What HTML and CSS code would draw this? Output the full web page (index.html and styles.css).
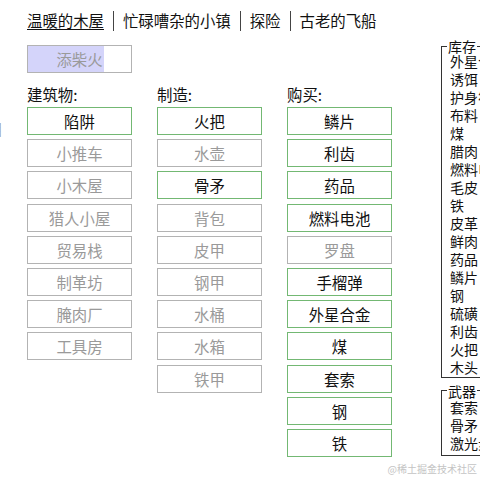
FILE: index.html
```html
<!DOCTYPE html>
<html lang="zh">
<head>
<meta charset="utf-8">
<title>温暖的木屋</title>
<link rel="stylesheet" href="styles.css">
</head>
<body>
<span class="edge-mark">目</span>
<div class="page">
  <div class="main">
    <div class="tabs">
      <span class="tab active">温暖的木屋</span>
      <span class="tab">忙碌嘈杂的小镇</span>
      <span class="tab">探险</span>
      <span class="tab">古老的飞船</span>
    </div>
    <div class="fire btn off">
      <div class="cooldown" style="width:74%"></div>
      <span class="label">添柴火</span>
    </div>
    <div class="columns">
      <div class="col">
        <div class="col-title">建筑物:</div>
        <div class="btn on">陷阱</div>
        <div class="btn off">小推车</div>
        <div class="btn off">小木屋</div>
        <div class="btn off">猎人小屋</div>
        <div class="btn off">贸易栈</div>
        <div class="btn off">制革坊</div>
        <div class="btn off">腌肉厂</div>
        <div class="btn off">工具房</div>
      </div>
      <div class="col">
        <div class="col-title">制造:</div>
        <div class="btn on">火把</div>
        <div class="btn off">水壶</div>
        <div class="btn on">骨矛</div>
        <div class="btn off">背包</div>
        <div class="btn off">皮甲</div>
        <div class="btn off">钢甲</div>
        <div class="btn off">水桶</div>
        <div class="btn off">水箱</div>
        <div class="btn off">铁甲</div>
      </div>
      <div class="col">
        <div class="col-title">购买:</div>
        <div class="btn on">鳞片</div>
        <div class="btn on">利齿</div>
        <div class="btn on">药品</div>
        <div class="btn on">燃料电池</div>
        <div class="btn off">罗盘</div>
        <div class="btn on">手榴弹</div>
        <div class="btn on">外星合金</div>
        <div class="btn on">煤</div>
        <div class="btn on">套索</div>
        <div class="btn on">钢</div>
        <div class="btn on">铁</div>
      </div>
    </div>
  </div>
  <div class="side">
    <fieldset class="store stock">
      <legend>库存</legend>
      <div class="item">外星合金</div>
      <div class="item">诱饵</div>
      <div class="item">护身符</div>
      <div class="item">布料</div>
      <div class="item">煤</div>
      <div class="item">腊肉</div>
      <div class="item">燃料电池</div>
      <div class="item">毛皮</div>
      <div class="item">铁</div>
      <div class="item">皮革</div>
      <div class="item">鲜肉</div>
      <div class="item">药品</div>
      <div class="item">鳞片</div>
      <div class="item">钢</div>
      <div class="item">硫磺</div>
      <div class="item">利齿</div>
      <div class="item">火把</div>
      <div class="item">木头</div>
    </fieldset>
    <fieldset class="store weapons">
      <legend>武器</legend>
      <div class="item">套索</div>
      <div class="item">骨矛</div>
      <div class="item">激光步枪</div>
    </fieldset>
  </div>
</div>
<div class="watermark">@稀土掘金技术社区</div>
</body>
</html>
```
FILE: styles.css
```css
html, body {
  margin: 0;
  padding: 0;
  width: 480px;
  height: 480px;
  overflow: hidden;
  background: #fff;
}
body {
  font-family: "Noto Sans CJK SC", "Noto Sans", sans-serif;
  font-size: 15.4px;
  color: #111;
  position: relative;
}
.page {
  display: flex;
  padding: 11px 0 0 27px;
}
.main {
  width: 365px;
  flex: none;
}
.tabs {
  display: flex;
  height: 20px;
  line-height: 19px;
  white-space: nowrap;
}
.tab {
  padding: 0 9px;
  border-left: 1px solid #444;
}
.tab:first-child {
  padding-left: 0;
  border-left: none;
}
.tab.active {
  text-decoration: underline;
  text-underline-offset: 2px;
}
.btn {
  box-sizing: border-box;
  width: 105px;
  height: 28px;
  line-height: 26px;
  text-align: center;
  border: 1px solid #b3b3b3;
  margin-bottom: 4.2px;
  white-space: nowrap;
}
.btn.on {
  border-color: #73b873;
  color: #111;
}
.btn.off {
  color: #9a9a9a;
}
.fire {
  position: relative;
  margin-top: 14px;
  margin-bottom: 0;
}
.fire .cooldown {
  position: absolute;
  left: 0;
  top: 0;
  bottom: 0;
  background: #d4d4fa;
}
.fire .label {
  position: relative;
}
.columns {
  display: flex;
  gap: 25px;
  margin-top: 12px;
}
.col {
  width: 105px;
}
.col-title {
  line-height: 18px;
  margin-bottom: 4px;
}
.side {
  margin-left: 49px;
  flex: none;
  width: 140px;
}
.store {
  margin: 0;
  padding: 0 0 1px 8px;
  border: 1px solid #333;
  width: 120px;
  font-size: 14px;
}
.store legend {
  padding: 0 1px;
  margin-left: -3px;
  line-height: 12px;
}
.store .item {
  line-height: 18px;
  white-space: nowrap;
}
.stock {
  margin-top: 29px;
}
.weapons {
  margin-top: 6.5px;
  padding-top: 1.5px;
  padding-bottom: 3px;
}
.watermark {
  position: absolute;
  right: 3px;
  bottom: 5px;
  font-size: 10px;
  line-height: 12px;
  color: #c4c4c4;
  white-space: nowrap;
}
.edge-mark {
  position: absolute;
  left: -12px;
  top: 118px;
  font-size: 15px;
  color: #999;
}
```
